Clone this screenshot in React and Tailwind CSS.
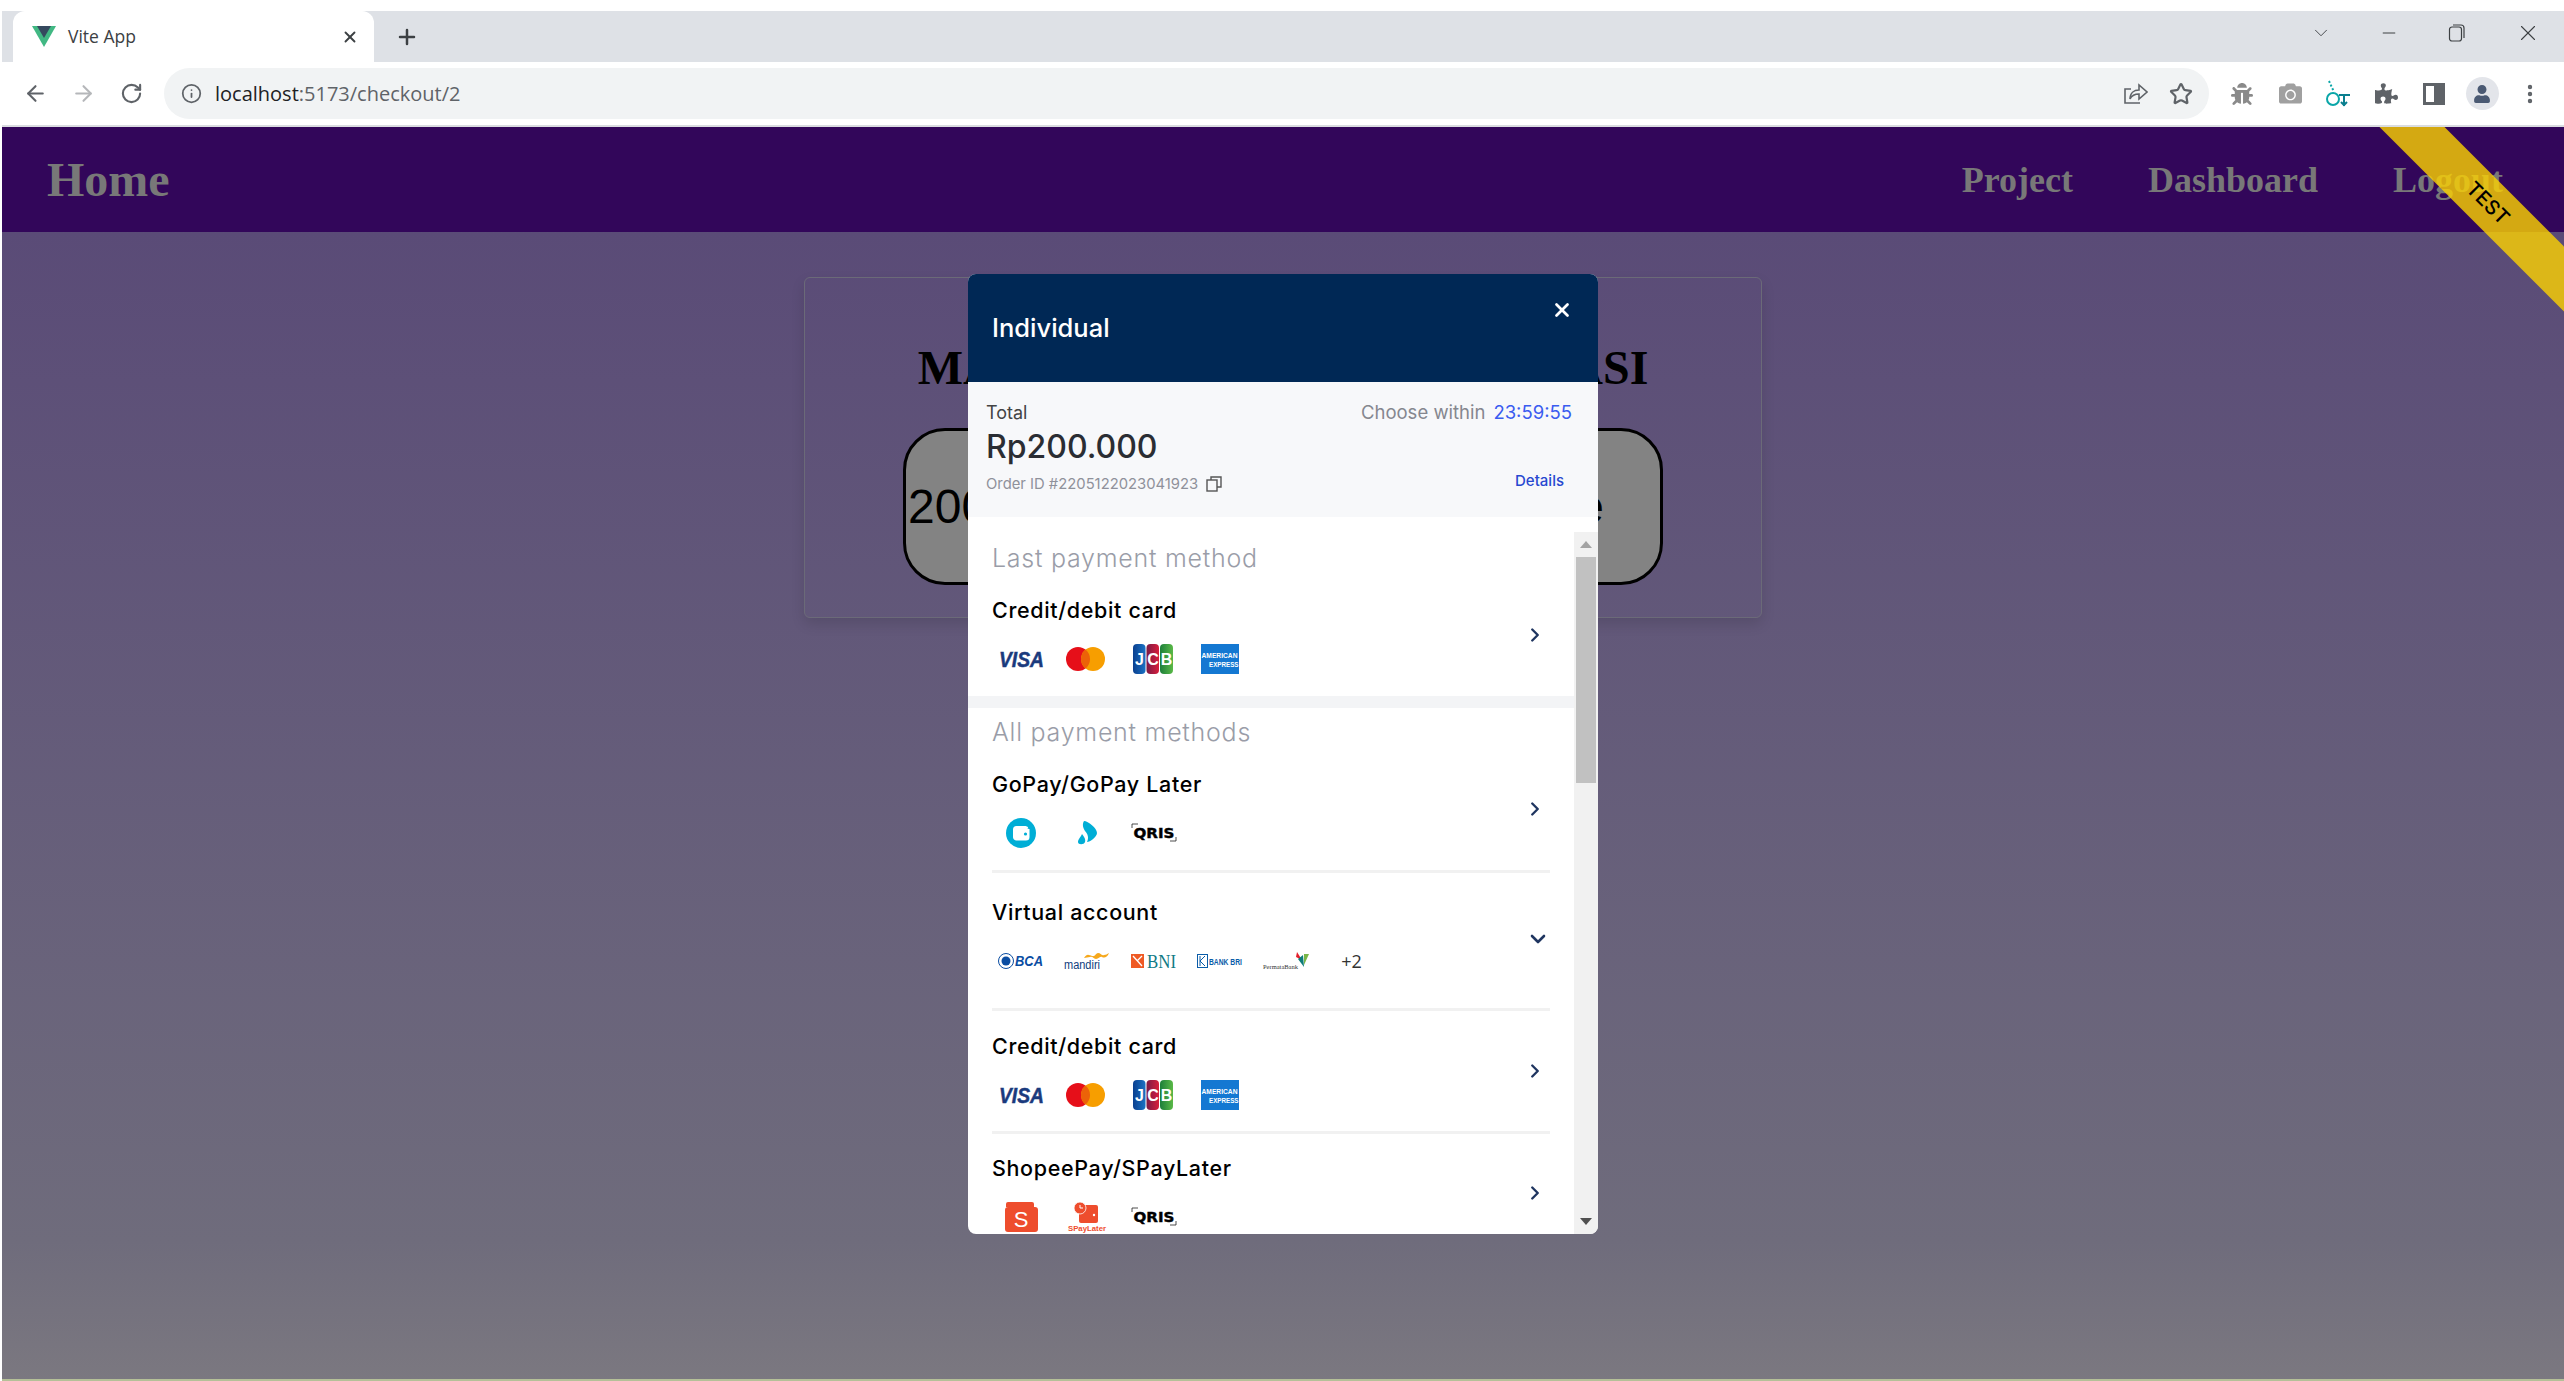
import React from "react";
import { ArrowLeft, ArrowRight, RotateCw, Info, Star, Plus, X, ChevronRight, ChevronDown, Minus, EllipsisVertical } from "lucide-react";
import { FaPuzzlePiece, FaCamera, FaBug, FaUser } from "react-icons/fa";

function VueLogo() {
    return (
        <svg width="24" height="21" viewBox="0 0 24 21">
            <polygon points="0,0 24,0 12,21" fill="#41b883" />
            <polygon points="5,0 19,0 12,12" fill="#35495e" />
        </svg>
    );
}

function ToolIcon({ children }) {
    return <div className="flex h-[48px] w-[48px] items-center justify-center">{children}</div>;
}

function BrowserChrome() {
    return (
        <div className="flex flex-col">
            <div className="h-[11px] bg-white" />
            <div className="flex h-[51px] items-center bg-[#dee1e6]">
                <div className="ml-[11px] flex h-[51px] w-[361px] items-center rounded-t-[12px] bg-white pl-[19px] pr-[15px]">
                    <VueLogo />
                    <span className="ml-[12px] flex-1 font-['Open_Sans',sans-serif] text-[17.5px] text-[#3c4043]">Vite App</span>
                    <X size={18} strokeWidth={2.5} className="text-[#3c4043]" />
                </div>
                <Plus size={24} strokeWidth={2.5} className="ml-[21px] text-[#3c4043]" />
                <div className="mb-[8px] flex flex-1 items-center justify-end pr-[23px] text-[#3c4043]">
                    <ChevronDown size={22} strokeWidth={1} className="mr-[47px]" />
                    <Minus size={20} strokeWidth={1.2} className="mr-[49px]" />
                    <svg width="18" height="20" viewBox="0 0 18 20" fill="none" stroke="currentColor" strokeWidth="1.2" className="mr-[49px]">
                        <rect x="1.5" y="4" width="12" height="14" rx="2.5" />
                        <path d="M5 2h8a3 3 0 0 1 3 3v10" />
                    </svg>
                    <X size={26} strokeWidth={1} />
                </div>
            </div>
            <div className="flex h-[63px] items-center bg-white pl-[9px] pr-[8px]">
                <ToolIcon><ArrowLeft size={25} strokeWidth={2} className="text-[#5f6368]" /></ToolIcon>
                <ToolIcon><ArrowRight size={25} strokeWidth={2} className="text-[#b5b7ba]" /></ToolIcon>
                <ToolIcon><RotateCw size={23} strokeWidth={2.2} className="text-[#5f6368]" /></ToolIcon>
                <div className="ml-[9px] flex h-[51px] w-[2045px] items-center rounded-full bg-[#f1f3f4] pl-[17px] pr-[16px]">
                    <Info size={21} strokeWidth={2} className="text-[#5f6368]" />
                    <span className="ml-[13px] flex-1 font-['Open_Sans',sans-serif] text-[20px] text-[#5f6368]">
                        <span className="text-[#202124]">localhost</span>:5173/checkout/2
                    </span>
                    <svg width="26" height="24" viewBox="0 0 26 24" fill="none" stroke="#5f6368" strokeWidth="1.6" className="mr-[21px]">
                        <path d="M18 21H3V7h6" />
                        <path d="M8 17c0-6 4-9 9-9V3l8 7-8 7v-5c-4 0-7 1-9 5z" />
                    </svg>
                    <Star size={24} strokeWidth={2.2} className="text-[#5f6368]" />
                </div>
                <div className="ml-[9px] flex">
                    <ToolIcon><FaBug size={22} className="text-[#8a8a8a]" /></ToolIcon>
                    <ToolIcon><FaCamera size={23} className="text-[#a0a0a0]" /></ToolIcon>
                    <ToolIcon>
                        <svg width="26" height="28" viewBox="0 0 26 28" fill="none" stroke="#0aa6a8" strokeWidth="2">
                            <path d="M2 19a6 6 0 1 0 12 0a6 6 0 1 0 -12 0" />
                            <path d="M4 1l5 11" strokeDasharray="2 2" />
                            <path d="M14 15h11M19 15v11M16 22l3 3 3-3" stroke="#0a7f8f" />
                        </svg>
                    </ToolIcon>
                    <ToolIcon><FaPuzzlePiece size={23} className="text-[#5f6368]" /></ToolIcon>
                    <ToolIcon>
                        <div className="flex h-[22px] w-[22px] border-[3px] border-[#5f6368]">
                            <div className="flex-1 bg-white" />
                            <div className="w-[8px] bg-[#5f6368]" />
                        </div>
                    </ToolIcon>
                    <ToolIcon>
                        <div className="flex h-[33px] w-[33px] items-center justify-center rounded-full bg-[#e3e5ea]">
                            <FaUser size={18} className="text-[#4b5a73]" />
                        </div>
                    </ToolIcon>
                    <ToolIcon><EllipsisVertical size={24} strokeWidth={2.4} className="text-[#5f6368]" /></ToolIcon>
                </div>
            </div>
            <div className="h-[2px] bg-[#dadce0]" />
        </div>
    );
}

function NavBar() {
    return (
        <nav className="flex h-[105px] items-center justify-between bg-[#32065a] pl-[45px] pr-[61px] font-['Liberation_Serif',serif] font-bold text-[#787878]">
            <span className="text-[48px]">Home</span>
            <div className="flex gap-[75px] text-[36px]">
                <span>Project</span>
                <span>Dashboard</span>
                <span>Logout</span>
            </div>
        </nav>
    );
}

function BackgroundCard() {
    return (
        <main className="flex h-[1147px] justify-center bg-linear-to-b from-[#5a4b77] via-[#6f6c7c] via-88% to-[#7b7880] pt-[45px]">
            <div className="h-[341px] w-[958px] rounded-[6px] border border-[#6b6a78] px-[98px] pt-[62px] shadow-[0_6px_14px_rgba(0,0,0,0.12)]">
                <h1 className="text-center font-['Liberation_Serif',serif] text-[48px] font-bold leading-[55px] text-black">MASUKKAN NOMINAL DONASI</h1>
                <div className="mt-[33px] flex h-[157px] items-center justify-between rounded-[42px] border-[3px] border-black bg-[#838383] pl-[2px] pr-[56px] font-['Liberation_Sans',sans-serif] text-[48px] text-black">
                    <span>200000</span>
                    <span>Donate</span>
                </div>
            </div>
        </main>
    );
}

function VisaLogo() {
    return (
        <svg width="46" height="24" viewBox="0 0 46 24" className="overflow-visible">
            <text x="1" y="20" fontFamily="Liberation Sans" fontWeight="700" fontStyle="italic" fontSize="22" fill="#1a3a7d" textLength="45" lengthAdjust="spacingAndGlyphs" stroke="#1a3a7d" strokeWidth="0.5">VISA</text>
        </svg>
    );
}

function MastercardLogo() {
    return (
        <svg width="40" height="24" viewBox="0 0 40 24" className="-ml-[2px]">
            <circle cx="12" cy="12" r="12" fill="#e60f19" />
            <circle cx="27" cy="12" r="12" fill="#f79e00" />
            <path d="M19.5 2.6a12 12 0 0 1 0 18.8a12 12 0 0 1 0-18.8z" fill="#ec6208" />
        </svg>
    );
}

function JcbLogo() {
    return (
        <svg width="40" height="30" viewBox="0 0 40 30" className="-ml-[2px]">
            <defs>
                <linearGradient id="jcbBlue" x1="0" x2="1" y1="0" y2="0"><stop offset="0" stopColor="#0a3f8f" /><stop offset="1" stopColor="#1a72c4" /></linearGradient>
                <linearGradient id="jcbRed" x1="0" x2="1" y1="0" y2="0"><stop offset="0" stopColor="#7a1a45" /><stop offset="1" stopColor="#d81e3c" /></linearGradient>
                <linearGradient id="jcbGreen" x1="0" x2="1" y1="0" y2="0"><stop offset="0" stopColor="#1d7f3a" /><stop offset="1" stopColor="#5ab947" /></linearGradient>
            </defs>
            <rect x="0" y="0" width="12.5" height="30" rx="4" fill="url(#jcbBlue)" />
            <rect x="13.5" y="0" width="12.5" height="30" rx="4" fill="url(#jcbRed)" />
            <rect x="27" y="0" width="13" height="30" rx="4" fill="url(#jcbGreen)" />
            <text x="6.5" y="21" textAnchor="middle" fontFamily="Liberation Sans" fontWeight="700" fontSize="16" fill="#fff">J</text>
            <text x="20" y="21" textAnchor="middle" fontFamily="Liberation Sans" fontWeight="700" fontSize="16" fill="#fff">C</text>
            <text x="33.5" y="21" textAnchor="middle" fontFamily="Liberation Sans" fontWeight="700" fontSize="16" fill="#fff">B</text>
        </svg>
    );
}

function AmexLogo() {
    return (
        <svg width="38" height="30" viewBox="0 0 38 30" className="overflow-visible">
            <rect width="38" height="30" fill="#1478d2" />
            <text x="0.5" y="14" fontFamily="Liberation Sans" fontWeight="700" fontSize="7" fill="#fff" textLength="36" lengthAdjust="spacingAndGlyphs">AMERICAN</text>
            <text x="8" y="23" fontFamily="Liberation Sans" fontWeight="700" fontSize="7" fill="#fff" textLength="29.5" lengthAdjust="spacingAndGlyphs">EXPRESS</text>
        </svg>
    );
}

function GopayLogo() {
    return (
        <svg width="30" height="30" viewBox="0 0 30 30">
            <circle cx="15" cy="15" r="15" fill="#00aed6" />
            <path d="M7 11.5a3.5 3.5 0 0 1 3.5-3.5h9a3 3 0 0 1 3 2.5h-1V11h2v8a3.5 3.5 0 0 1-3.5 3.5h-10A3.5 3.5 0 0 1 7 19z" fill="#fff" />
            <circle cx="19.5" cy="16" r="1.6" fill="#00aed6" />
        </svg>
    );
}

function GopayLaterLogo() {
    return (
        <svg width="20" height="24" viewBox="0 0 20 24">
            <path d="M7 0c4 0 13 7 13 12c0 4-7 9-10 9c2-4 1-8-2-11C6 7 5 3 7 0z" fill="#00aed6" />
            <path d="M5 13c2 3 4 5 3 8c-1 3-7 3-7 0c0-3 3-5 4-8z" fill="#00aed6" />
        </svg>
    );
}

function QrisLogo() {
    return (
        <svg width="44" height="18" viewBox="0 0 44 18" className="overflow-visible">
            <path d="M0 4V0h6M44 13v4h-6" fill="none" stroke="#222" strokeWidth="0.8" />
            <text x="1.5" y="14" fontFamily="DejaVu Sans" fontWeight="700" fontSize="14" fill="#000" stroke="#000" strokeWidth="0.4" textLength="41" lengthAdjust="spacingAndGlyphs">QRIS</text>
        </svg>
    );
}

function BcaLogo() {
    return (
        <svg width="46" height="20" viewBox="0 0 46 20" className="overflow-visible">
            <circle cx="8" cy="10" r="7.5" fill="#fff" stroke="#0a4da2" strokeWidth="1" />
            <circle cx="8" cy="10" r="4.5" fill="#0a4da2" />
            <text x="17" y="15" fontFamily="Liberation Sans" fontWeight="700" fontStyle="italic" fontSize="15" fill="#0a4da2" textLength="28" lengthAdjust="spacingAndGlyphs">BCA</text>
        </svg>
    );
}

function MandiriLogo() {
    return (
        <svg width="46" height="20" viewBox="0 0 46 20" className="overflow-visible">
            <path d="M20 7c3-5 5-3 8-2c3 1 4-3 6-3c3 0 3 3 6 2c2 0 3-1 5-2c-2 5-5 5-7 4c-2-1-3 2-6 2c-3 0-3-3-6-2z" fill="#f6a81c" />
            <text x="0" y="18" fontFamily="Liberation Sans" fontSize="12" fill="#0f3e7e" textLength="36" lengthAdjust="spacingAndGlyphs">mandiri</text>
        </svg>
    );
}

function BniLogo() {
    return (
        <svg width="46" height="18" viewBox="0 0 46 18" className="overflow-visible">
            <rect x="0" y="2" width="13" height="14" fill="#ef5a24" />
            <path d="M2 4l9 10M11 4L6 9" stroke="#fff" strokeWidth="1.3" fill="none" />
            <text x="16" y="16" fontFamily="Liberation Serif" fontSize="19" fill="#0f7a85" textLength="29" lengthAdjust="spacingAndGlyphs">BNI</text>
        </svg>
    );
}

function BriLogo() {
    return (
        <svg width="46" height="16" viewBox="0 0 46 16" className="overflow-visible">
            <rect x="0.5" y="1.5" width="10" height="13" fill="#fff" stroke="#0a5ca8" strokeWidth="1" />
            <path d="M3 3v10M3 8l5-5M3 8l5 5" stroke="#0a5ca8" strokeWidth="1" fill="none" />
            <text x="12" y="12" fontFamily="Liberation Sans" fontWeight="700" fontSize="9" fill="#0a5ca8" textLength="33" lengthAdjust="spacingAndGlyphs">BANK BRI</text>
        </svg>
    );
}

function PermataLogo() {
    return (
        <svg width="46" height="20" viewBox="0 0 46 20" className="overflow-visible">
            <path d="M34 1l5 8-6-3z" fill="#e3202c" />
            <path d="M41 3l5 0-5 11z" fill="#7ab648" />
            <path d="M35 8l5-4 1 12z" fill="#0e7c7b" />
            <text x="0" y="18" fontFamily="Liberation Serif" fontSize="7" fill="#333" textLength="35" lengthAdjust="spacingAndGlyphs">PermataBank</text>
        </svg>
    );
}

function ShopeeLogo() {
    return (
        <div className="relative flex h-[30px] w-[33px] items-end">
            <div className="absolute left-[1px] top-0 h-[5px] w-[28px] rounded-t-[2px] bg-[#ee4d2d]" />
            <div className="flex h-[25px] w-[33px] items-center justify-center rounded-[3px] bg-[#ee4d2d] font-['Liberation_Sans',sans-serif] text-[22px] leading-none text-white">S</div>
        </div>
    );
}

function SPayLaterLogo() {
    return (
        <svg width="38" height="30" viewBox="0 0 38 30" className="overflow-visible">
            <rect x="11" y="3" width="19" height="18" rx="2" fill="#ee4d2d" />
            <circle cx="12" cy="6" r="6" fill="#ee4d2d" stroke="#fff" strokeWidth="0.8" />
            <path d="M12 3v3h3" stroke="#fff" strokeWidth="1" fill="none" />
            <circle cx="26" cy="13" r="1.2" fill="#fff" />
            <text x="0" y="29" fontFamily="Liberation Sans" fontWeight="700" fontSize="8" fill="#ee4d2d" textLength="38" lengthAdjust="spacingAndGlyphs">SPayLater</text>
        </svg>
    );
}

function PlusMore() {
    return <span className="-ml-[2px] font-['Open_Sans',sans-serif] text-[18px] text-[#333]">+2</span>;
}

function Logos({ items }) {
    return (
        <div className="-ml-[4px] mt-[18px] flex h-[30px] items-center">
            {items.map((item, i) => (
                <div key={i} className="flex w-[66.3px] items-center justify-center">{item}</div>
            ))}
        </div>
    );
}

const cardLogos = [<VisaLogo />, <MastercardLogo />, <JcbLogo />, <AmexLogo />];

function PaymentMethod({ title, items, expanded, className }) {
    return (
        <div className={`flex items-center justify-between ${className}`}>
            <div>
                <div className="text-[21.5px] font-medium leading-[32px] tracking-[0.65px] text-black">{title}</div>
                <Logos items={items} />
            </div>
            {expanded
                ? <ChevronDown size={24} strokeWidth={2.6} className="mt-[6px] text-[#1f3560]" />
                : <ChevronRight size={22} strokeWidth={2.6} className="mr-[4px] mt-[2px] text-[#1f3560]" />}
        </div>
    );
}

function SectionLabel({ children }) {
    return <div className="text-[25px] font-light leading-[34px] tracking-[0.75px] text-[#9a9da8]">{children}</div>;
}

function Divider() {
    return <div className="h-[3px] bg-[#f1f1f1]" />;
}

function Scrollbar() {
    return (
        <div className="flex w-[24px] flex-col items-center bg-[#f1f1f1]">
            <div className="flex h-[25px] items-center justify-center">
                <div className="h-0 w-0 border-x-[6px] border-b-[7px] border-x-transparent border-b-[#a3a3a3]" />
            </div>
            <div className="h-[226px] w-[20px] bg-[#c1c1c1]" />
            <div className="flex-1" />
            <div className="flex h-[16px] items-start justify-center">
                <div className="h-0 w-0 border-x-[6px] border-t-[7px] border-x-transparent border-t-[#505050]" />
            </div>
        </div>
    );
}

function PaymentModal() {
    return (
        <div className="absolute left-[968px] top-[274px] flex h-[960px] w-[630px] flex-col overflow-hidden rounded-[8px] bg-white font-['Inter',sans-serif]">
            <div className="flex h-[108px] items-start justify-between bg-[#002855] pl-[24px] pr-[25px] text-white">
                <span className="mt-[37px] text-[25.5px] font-medium leading-[34px]">Individual</span>
                <X size={22} strokeWidth={3} className="mt-[25px]" />
            </div>
            <div className="flex h-[135px] justify-between bg-[#f7f8fa] pl-[18px] pr-[26px]">
                <div className="flex flex-col">
                    <span className="mt-[19px] text-[18px] leading-[24px] text-[#444]">Total</span>
                    <span className="mt-[0px] text-[32px] font-medium leading-[44px] text-[#2a2d33]">Rp200.000</span>
                    <div className="mt-[4px] flex items-center gap-[8px] text-[#8f919b]">
                        <span className="text-[14.8px] leading-[22px]">Order ID #2205122023041923</span>
                        <svg width="16" height="16" viewBox="0 0 16 16" fill="none" stroke="#555" strokeWidth="1.4">
                            <rect x="1" y="4" width="10" height="11" />
                            <path d="M5 4V1h10v10h-4" />
                        </svg>
                    </div>
                </div>
                <div className="flex flex-col items-end">
                    <div className="mt-[18px] flex gap-[8px] text-[18.5px] leading-[24px]">
                        <span className="text-[#85878f]">Choose within</span>
                        <span className="text-[#3a5cf0]">23:59:55</span>
                    </div>
                    <span className="mr-[8px] mt-[46px] text-[15px] font-medium leading-[22px] text-[#2748d0]">Details</span>
                </div>
            </div>
            <div className="h-[15px] bg-white" />
            <div className="flex min-h-0 flex-1">
                <div className="flex-1 overflow-hidden">
                    <div className="px-[24px] pb-[22px] pt-[9px]">
                        <SectionLabel>Last payment method</SectionLabel>
                        <PaymentMethod title="Credit/debit card" items={cardLogos} className="mt-[19px]" />
                    </div>
                    <div className="h-[12px] bg-[#f3f4f6]" />
                    <div className="px-[24px] pt-[7px]">
                        <SectionLabel>All payment methods</SectionLabel>
                        <PaymentMethod title="GoPay/GoPay Later" items={[<GopayLogo />, <GopayLaterLogo />, <QrisLogo />]} className="mb-[22px] mt-[19px]" />
                        <Divider />
                        <PaymentMethod title="Virtual account" expanded items={[<BcaLogo />, <MandiriLogo />, <BniLogo />, <BriLogo />, <PermataLogo />, <PlusMore />]} className="mb-[32px] mt-[23px]" />
                        <Divider />
                        <PaymentMethod title="Credit/debit card" items={cardLogos} className="mb-[21px] mt-[19px]" />
                        <Divider />
                        <PaymentMethod title="ShopeePay/SPayLater" items={[<ShopeeLogo />, <SPayLaterLogo />, <QrisLogo />]} className="mt-[18px]" />
                    </div>
                </div>
                <Scrollbar />
            </div>
        </div>
    );
}

function TestRibbon() {
    return (
        <div className="absolute right-[-74px] top-[53px] flex h-[46px] w-[300px] rotate-45 items-center justify-center bg-[rgba(252,210,0,0.8)] font-['Inter',sans-serif] text-[20px] font-medium text-black">
            TEST
        </div>
    );
}

export default function App() {
    return (
        <div className="h-[1381px] w-[2564px] overflow-hidden bg-white pl-[2px]">
            <BrowserChrome />
            <div className="relative overflow-hidden">
                <NavBar />
                <BackgroundCard />
                <TestRibbon />
            </div>
            <PaymentModal />
            <div className="h-[2px] bg-[#b5c098]" />
        </div>
    );
}
